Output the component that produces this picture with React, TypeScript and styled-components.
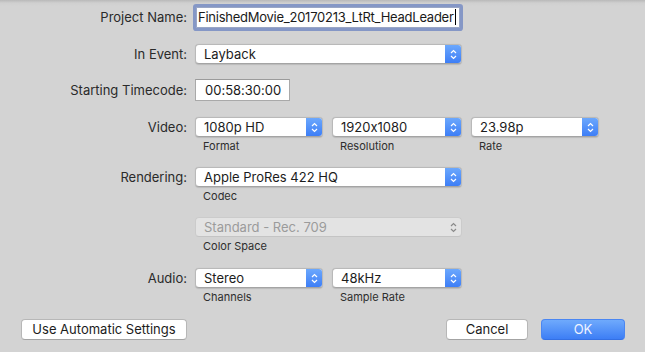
import styled, { createGlobalStyle } from "styled-components";

const GlobalStyle = createGlobalStyle`
  html, body {
    margin: 0;
    padding: 0;
    background: #d3d3d3;
    font-family: Inter, "Liberation Sans", sans-serif;
    font-feature-settings: "calt" 0;
    color: #262626;
  }
`;

const Sheet = styled.div`
  width: 645px;
  height: 352px;
  box-sizing: border-box;
  background: linear-gradient(#b9b9b9 0px, #cfcfcf 3px, #d3d3d3 6px);
  padding-top: 7px;
  display: flex;
  flex-direction: column;
`;

const Row = styled.div<{ $top?: number }>`
  display: grid;
  grid-template-columns: 187px auto;
  column-gap: 8px;
  align-items: start;
  margin-top: ${(p) => p.$top ?? 0}px;
`;

const Label = styled.div<{ $h?: number }>`
  font-size: 13px;
  text-align: right;
  height: ${(p) => p.$h ?? 20}px;
  line-height: ${(p) => p.$h ?? 20}px;
  color: #2a2a2a;
`;

const Controls = styled.div`
  display: flex;
  gap: 9px;
`;

const Field = styled.div`
  display: flex;
  flex-direction: column;
`;

const SubLabel = styled.div`
  font-size: 11px;
  line-height: 13px;
  margin-top: 3px;
  padding-left: 8px;
  color: #2e2e2e;
`;

const TextInput = styled.div`
  width: 264px;
  height: 21px;
  margin-left: 1px;
  box-sizing: border-box;
  background: #fff;
  border: 1px solid #9aa6c4;
  box-shadow: 0 0 0 3px #8597c6;
  border-radius: 1px;
  font-size: 13px;
  letter-spacing: -0.25px;
  line-height: 19px;
  padding-left: 1px;
  white-space: nowrap;
  overflow: hidden;
  color: #1a1a1a;
`;

const Caret = styled.span`
  display: inline-block;
  width: 1px;
  height: 16px;
  margin-left: 1px;
  background: #000;
  vertical-align: -3px;
`;

const TimeInput = styled.div`
  width: 95px;
  height: 22px;
  box-sizing: border-box;
  background: #fff;
  border: 1px solid #a9a9a9;
  border-top-color: #9b9b9b;
  font-size: 13px;
  line-height: 20px;
  padding-left: 9px;
  color: #1a1a1a;
`;

const Popup = styled.div<{ $w: number; $disabled?: boolean }>`
  width: ${(p) => p.$w}px;
  height: 20px;
  box-sizing: border-box;
  display: flex;
  align-items: stretch;
  border-radius: 4px;
  background: ${(p) => (p.$disabled ? "#e3e3e3" : "#fff")};
  border: 1px solid ${(p) => (p.$disabled ? "#cbcbcb" : "#b9b9b9")};
  border-bottom-color: ${(p) => (p.$disabled ? "#c4c4c4" : "#a4a4a4")};
  box-shadow: ${(p) => (p.$disabled ? "none" : "0 0.5px 1px rgba(0,0,0,0.12)")};
  overflow: hidden;
`;

const PopupText = styled.div<{ $disabled?: boolean }>`
  flex: 1;
  font-size: 13px;
  line-height: 18px;
  padding-left: 8px;
  color: ${(p) => (p.$disabled ? "#9b9b9b" : "#1c1c1c")};
  white-space: nowrap;
`;

const Stepper = styled.div<{ $disabled?: boolean }>`
  width: 17px;
  display: flex;
  align-items: center;
  justify-content: center;
  margin: -1px -1px -1px 0;
  border-radius: 0 4px 4px 0;
  background: ${(p) =>
    p.$disabled ? "transparent" : "linear-gradient(#6eaafd, #3b7cf6)"};
`;

const Footer = styled.div`
  display: flex;
  align-items: center;
  padding: 0 20px 0 21px;
  margin-top: 15px;
`;

const Spacer = styled.div`
  flex: 1;
`;

const Button = styled.div<{ $w: number; $primary?: boolean }>`
  width: ${(p) => p.$w}px;
  height: 21px;
  box-sizing: border-box;
  border-radius: 4px;
  font-size: 13px;
  line-height: 19px;
  text-align: center;
  background: ${(p) => (p.$primary ? "linear-gradient(#6faafc, #3d7ef5)" : "#fff")};
  border: 1px solid ${(p) => (p.$primary ? "#4a86f2" : "#b7b7b7")};
  border-bottom-color: ${(p) => (p.$primary ? "#3470e4" : "#a3a3a3")};
  color: ${(p) => (p.$primary ? "#eef3ff" : "#1c1c1c")};
  margin-left: ${(p) => (p.$primary ? 13 : 0)}px;
`;

const Chevrons = ({ color }: { color: string }) => (
  <svg width="7" height="11" viewBox="0 0 7 11">
    <path d="M1 4 L3.5 1.5 L6 4" fill="none" stroke={color} strokeWidth="1.2" />
    <path d="M1 7 L3.5 9.5 L6 7" fill="none" stroke={color} strokeWidth="1.2" />
  </svg>
);

const Select = ({
  value,
  width,
  disabled,
}: {
  value: string;
  width: number;
  disabled?: boolean;
}) => (
  <Popup $w={width} $disabled={disabled}>
    <PopupText $disabled={disabled}>{value}</PopupText>
    <Stepper $disabled={disabled}>
      <Chevrons color={disabled ? "#8a8a8a" : "#fff"} />
    </Stepper>
  </Popup>
);

const App = () => {
  return (
    <>
      <GlobalStyle />
      <Sheet>
        <Row>
          <Label $h={21}>Project Name:</Label>
          <TextInput>
            FinishedMovie_20170213_LtRt_HeadLeader
            <Caret />
          </TextInput>
        </Row>
        <Row $top={16}>
          <Label>In Event:</Label>
          <Select value="Layback" width={267} />
        </Row>
        <Row $top={15}>
          <Label $h={22}>Starting Timecode:</Label>
          <TimeInput>00:58:30:00</TimeInput>
        </Row>
        <Row $top={16}>
          <Label>Video:</Label>
          <Controls>
            <Field>
              <Select value="1080p HD" width={128} />
              <SubLabel>Format</SubLabel>
            </Field>
            <Field>
              <Select value="1920x1080" width={130} />
              <SubLabel>Resolution</SubLabel>
            </Field>
            <Field>
              <Select value="23.98p" width={128} />
              <SubLabel>Rate</SubLabel>
            </Field>
          </Controls>
        </Row>
        <Row $top={14}>
          <Label>Rendering:</Label>
          <Field>
            <Select value="Apple ProRes 422 HQ" width={267} />
            <SubLabel>Codec</SubLabel>
          </Field>
        </Row>
        <Row $top={14}>
          <Label />
          <Field>
            <Select value="Standard - Rec. 709" width={267} disabled />
            <SubLabel>Color Space</SubLabel>
          </Field>
        </Row>
        <Row $top={15}>
          <Label>Audio:</Label>
          <Controls>
            <Field>
              <Select value="Stereo" width={128} />
              <SubLabel>Channels</SubLabel>
            </Field>
            <Field>
              <Select value="48kHz" width={130} />
              <SubLabel>Sample Rate</SubLabel>
            </Field>
          </Controls>
        </Row>
        <Footer>
          <Button $w={166}>Use Automatic Settings</Button>
          <Spacer />
          <Button $w={82}>Cancel</Button>
          <Button $w={84} $primary>
            OK
          </Button>
        </Footer>
      </Sheet>
    </>
  );
};

export default App;
